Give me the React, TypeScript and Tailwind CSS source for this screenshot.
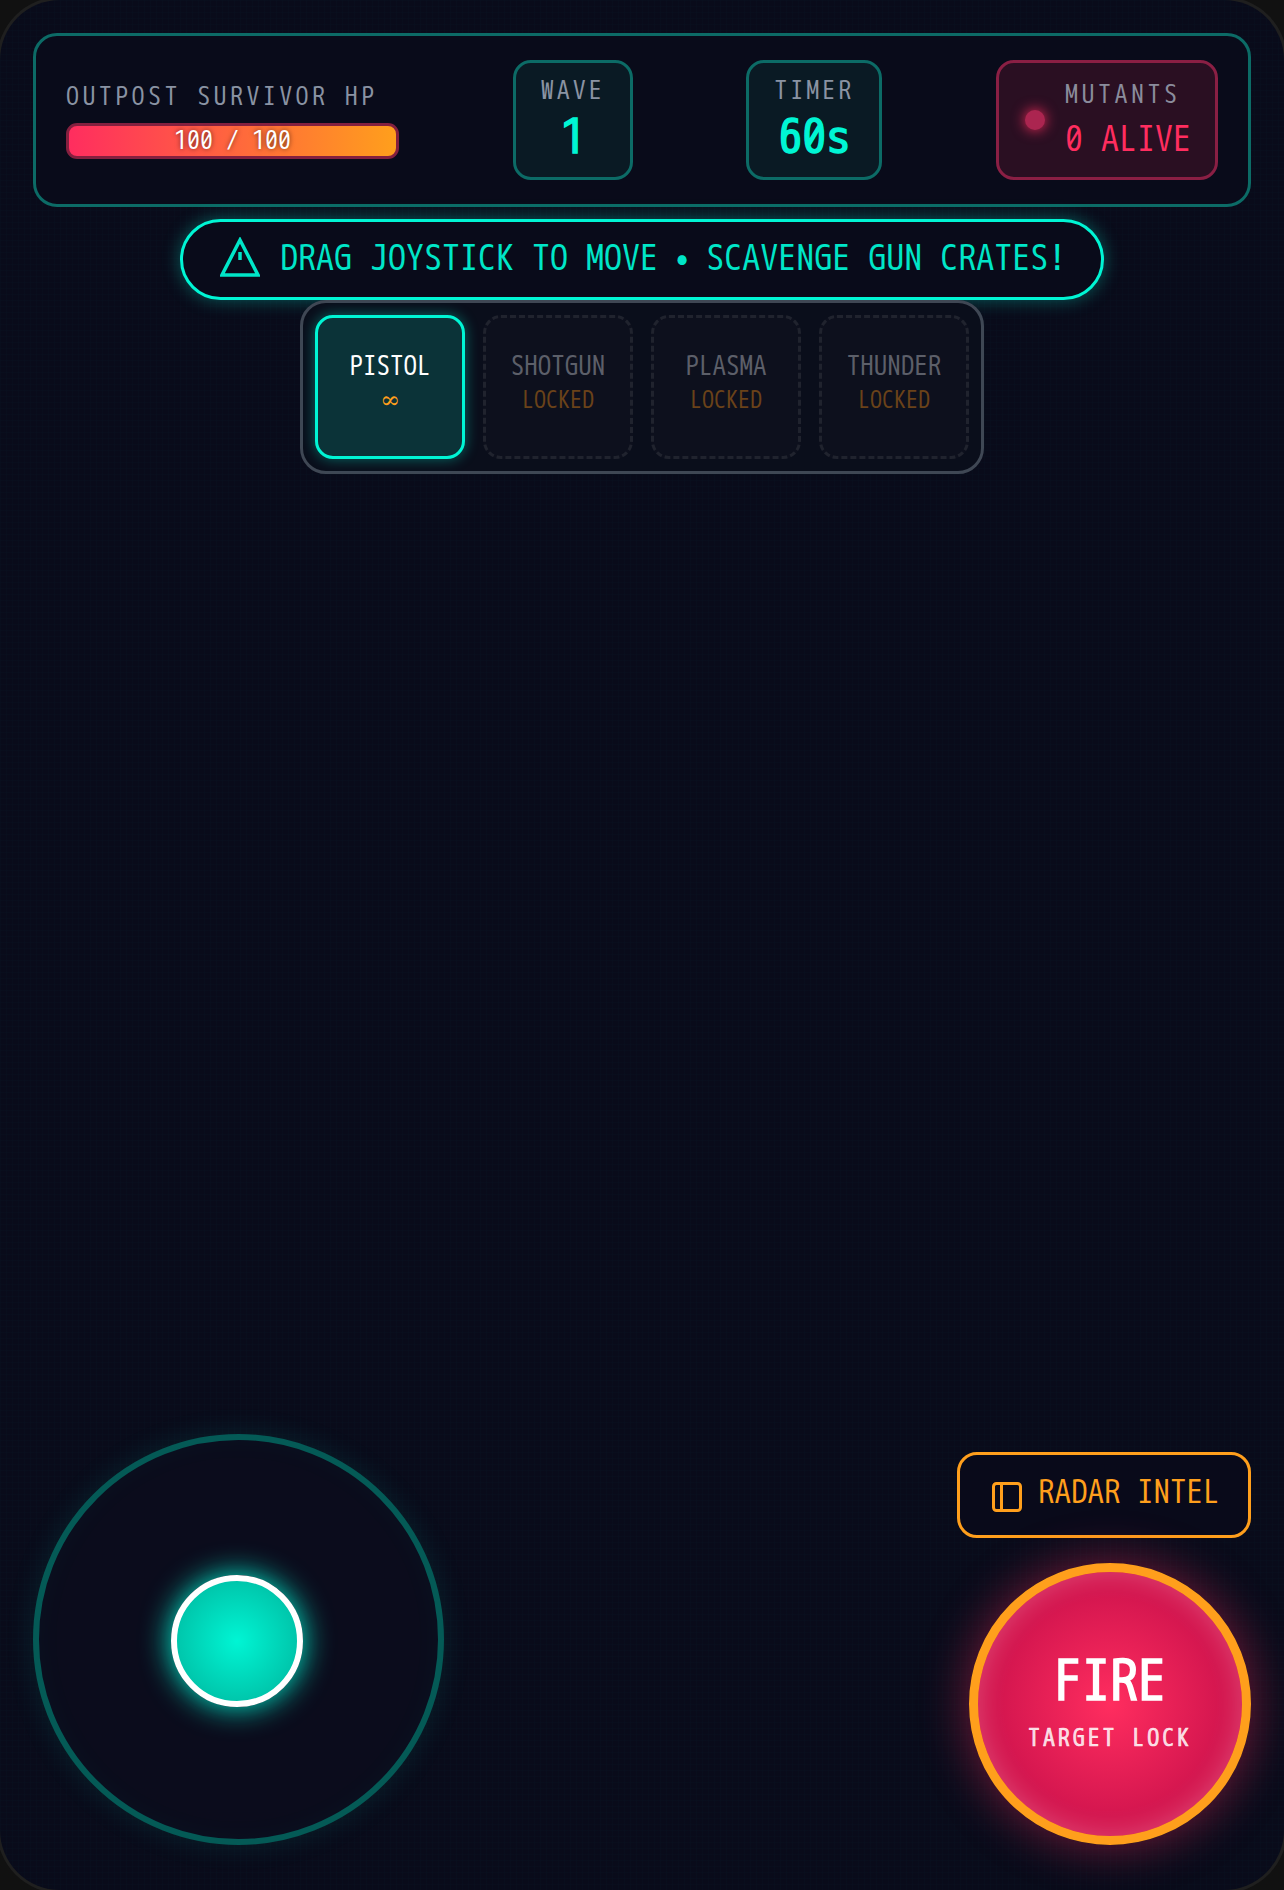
function Stat({ label, value, w }: { label: string; value: string; w: string }) {
  return (
    <div className={`flex h-[120px] flex-col items-center justify-center rounded-[18px] border-3 border-[#0c6b66] bg-[#0a1a24] ${w}`}>
      <div className="mb-[3px] text-[26px] leading-[32px] tracking-[3px] text-[#8a93a3]">{label}</div>
      <div className="text-[48px] leading-[56px] font-bold text-[#00f5d4] [-webkit-text-stroke:1.5px_#00f5d4]">{value}</div>
    </div>
  );
}

function Locked({ name }: { name: string }) {
  return (
    <div className="flex h-[144px] w-[150px] flex-col items-center justify-center rounded-[18px] border-3 border-dashed border-[#20232e] bg-[#0d101d] pb-[8px]">
      <div className="text-[27px] leading-[34px] text-[#5c5f69]">{name}</div>
      <div className="text-[24px] leading-[34px] text-[#6a4219]">LOCKED</div>
    </div>
  );
}

export default function App() {
  return (
    <div className="h-[1890px] w-[1284px] overflow-hidden bg-[#111111] font-['WenQuanYi_Zen_Hei_Mono',monospace]">
      <div className="flex h-full w-full flex-col rounded-[60px] bg-[#090b1a] bg-[linear-gradient(rgba(0,245,212,0.012)_1px,transparent_1px),linear-gradient(90deg,rgba(0,245,212,0.012)_1px,transparent_1px)] bg-[size:6px_6px] px-[33px] pt-[33px] pb-[45px] shadow-[0_0_0_3px_#1f1f1f]">
        <header className="flex h-[174px] items-center justify-between rounded-[24px] border-3 border-[#0c6b66] bg-[#090b1a] px-[30px]">
          <div className="flex w-[333px] flex-col gap-[10px]">
            <div className="text-[26px] leading-[32px] tracking-[3.4px] whitespace-nowrap text-[#8a93a3]">OUTPOST SURVIVOR HP</div>
            <div className="flex h-[36px] items-center justify-center rounded-[11px] border-3 border-[#84203f] bg-[linear-gradient(90deg,#ff2d5f,#ff9f1c)] text-[26px] leading-none text-white [text-shadow:0_0_5px_rgba(0,0,0,0.6)]">
              100 / 100
            </div>
          </div>
          <Stat label="WAVE" value="1" w="w-[120px]" />
          <Stat label="TIMER" value="60s" w="w-[136px]" />
          <div className="flex h-[120px] w-[222px] items-center gap-[20px] rounded-[18px] border-3 border-[#8a1f44] bg-[#2a0f22] pl-[26px]">
            <div className="h-[20px] w-[20px] shrink-0 rounded-full bg-[#ab2550] shadow-[0_0_14px_#ff2d5f]" />
            <div className="flex flex-col items-start">
              <div className="mb-[5px] text-[26px] leading-[34px] tracking-[3.5px] text-[#8a8c9c]">MUTANTS</div>
              <div className="text-[36px] leading-[46px] text-[#ff2d5f]">0 ALIVE</div>
            </div>
          </div>
        </header>

        <div className="mt-[12px] flex h-[81px] w-[924px] items-center gap-[20px] self-center rounded-full border-3 border-[#00f5d4] bg-[#090b1a] pl-[37px] text-[36px] whitespace-nowrap text-[#00e6c8] shadow-[0_0_18px_rgba(0,245,212,0.35)]">
          <svg className="-mt-[5px] shrink-0" width="40" height="40" viewBox="0 0 40 40" fill="none" stroke="#00e6c8" strokeWidth="3.5">
            <path d="M20 3 L38 38 H2 Z" />
            <path d="M20 15 V23" />
          </svg>
          <span className="-mt-[5px]">
            DRAG JOYSTICK TO MOVE <span className="font-['Noto_Sans_Mono_CJK_JP',monospace]">•</span> SCAVENGE GUN CRATES!
          </span>
        </div>

        <div className="flex gap-[18px] self-center rounded-[26px] border-3 border-[#3f4754] bg-[#0a0e1b] p-[12px]">
          <div className="flex h-[144px] w-[150px] flex-col items-center justify-center rounded-[18px] border-3 border-[#00f5d4] bg-[#0b3338] pb-[8px] shadow-[0_0_14px_rgba(0,245,212,0.4)]">
            <div className="text-[27px] leading-[34px] text-white">PISTOL</div>
            <div className="text-[24px] leading-[34px] text-[#ff9f1c]">∞</div>
          </div>
          <Locked name="SHOTGUN" />
          <Locked name="PLASMA" />
          <Locked name="THUNDER" />
        </div>

        <div className="mt-auto flex items-end justify-between">
          <div className="flex h-[411px] w-[411px] items-center justify-center rounded-full border-6 border-[#045a56] bg-[#0b0c1c] shadow-[0_0_30px_rgba(0,245,212,0.1),inset_0_0_30px_rgba(0,245,212,0.03)]">
            <div className="mt-[2px] -ml-[3px] h-[132px] w-[132px] rounded-full border-6 border-white bg-[radial-gradient(circle,#00f5d4,#00b39b)] shadow-[0_0_30px_#00f5d4]" />
          </div>
          <div className="flex flex-col items-end gap-[25px]">
            <div className="flex h-[86px] w-[294px] items-center gap-[16px] rounded-[20px] border-3 border-[#ff9f1c] bg-[#090a1a] pl-[32px] text-[33px] whitespace-nowrap text-[#ff9f1c]">
              <svg className="mt-[4px] shrink-0" width="30" height="30" viewBox="0 0 30 30" fill="none" stroke="#ff9f1c" strokeWidth="3">
                <rect x="1.5" y="1.5" width="27" height="27" rx="3" />
                <path d="M9.5 1.5 V28.5" />
              </svg>
              <span className="-mt-[2px]">RADAR INTEL</span>
            </div>
            <div className="flex h-[282px] w-[282px] flex-col items-center justify-center rounded-full border-9 border-[#ff9f1c] bg-[radial-gradient(circle,#ff2d5f,#d4164f_60%,#d4164f)] shadow-[0_0_50px_rgba(255,45,95,0.45),inset_0_0_28px_rgba(255,255,255,0.22)]">
              <div className="mb-[8px] text-[56px] leading-[60px] font-bold text-white [-webkit-text-stroke:1.5px_#ffffff]">FIRE</div>
              <div className="text-[24px] leading-[34px] font-bold tracking-[2.9px] text-white/80 [-webkit-text-stroke:0.7px_rgba(255,255,255,0.8)]">TARGET LOCK</div>
            </div>
          </div>
        </div>
      </div>
    </div>
  );
}
